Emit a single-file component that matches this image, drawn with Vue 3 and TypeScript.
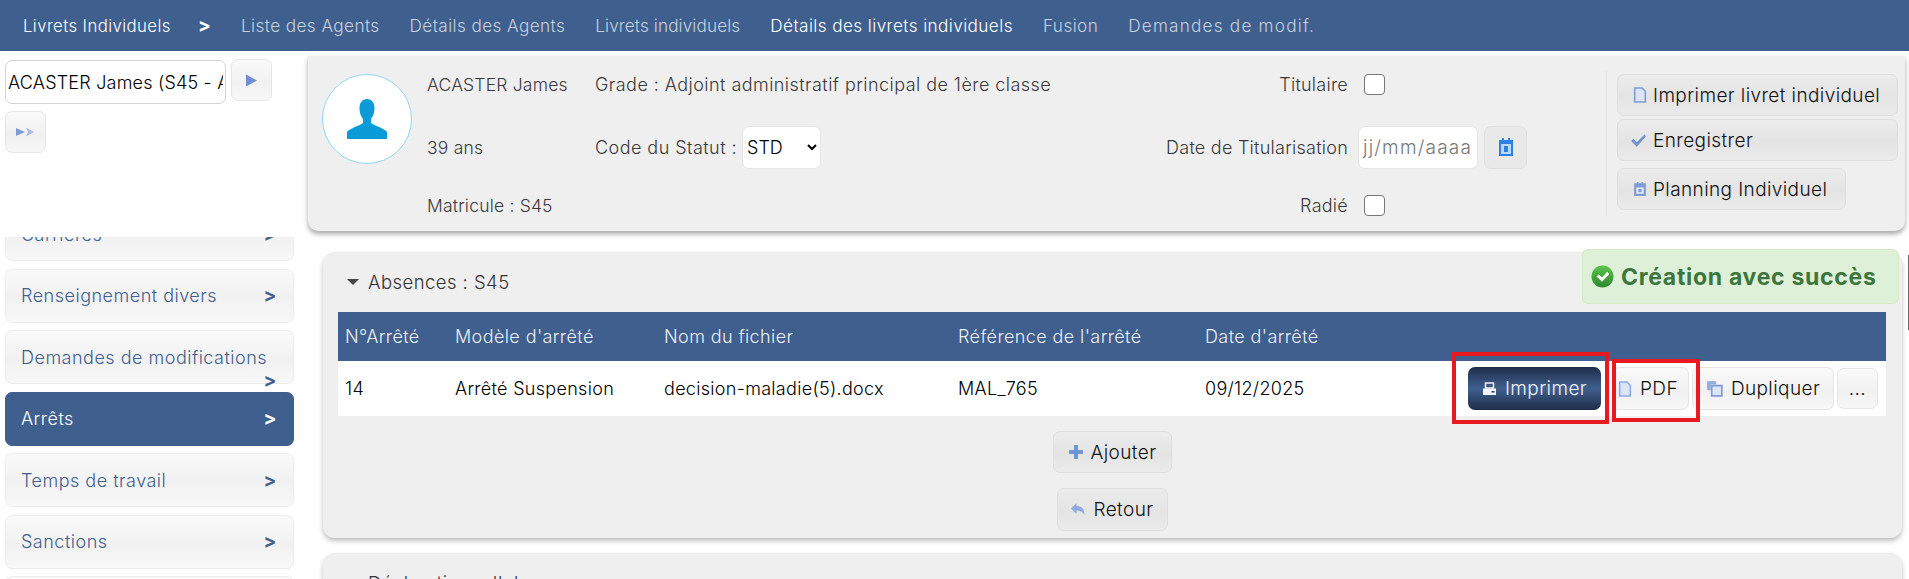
<script setup lang="ts">

import {ref} from 'vue'

const navLinks = [
  {label: 'Liste des Agents'},
  {label: 'Détails des Agents'},
  {label: 'Livrets individuels', tight: true},
  {label: 'Détails des livrets individuels', active: true},
  {label: 'Fusion'},
  {label: 'Demandes de modif.', wide: true},
]

const menu = [
  {label: 'Renseignement divers'},
  {label: 'Demandes de modifications', wrapped: true},
  {label: 'Arrêts', active: true},
  {label: 'Temps de travail'},
  {label: 'Sanctions'},
  {label: 'Formations'},
]

const statut = ref('STD')

</script>

<template>

  <div class="page">

    <header class="top-nav">
      <span class="top-nav__title">Livrets Individuels</span>
      <span class="top-nav__sep">&gt;</span>
      <a v-for="link in navLinks" :key="link.label" :class="['top-nav__link', {'top-nav__link--active': link.active, 'top-nav__link--wide': link.wide, 'top-nav__link--tight': link.tight}]">{{ link.label }}</a>
    </header>

    <div class="body">

      <aside class="side">
        <div class="side__search">
          <input class="agent-input" type="text" value="ACASTER James (S45 - Adjoint administratif)">
          <button class="btn btn--square">
            <svg width="15" height="15" viewBox="0 0 15 15"><path d="M2 1.500 13 7.500 2 13.500z" fill="#6f8fd0"/></svg>
          </button>
          <button class="btn btn--square btn--second">
            <svg width="22" height="12" viewBox="0 0 22 12"><path d="M1 2 10 6 1 10z" fill="#7f9bd6"/><path d="M11 1.500 19 6 11 10.500 13 6z" fill="#a9bde6"/></svg>
          </button>
        </div>

        <div class="side__menu">
          <div class="menu-item menu-item--cut">
            <span>Carrières</span>
            <span class="menu-item__chev">&gt;</span>
          </div>
          <div v-for="item in menu" :key="item.label" :class="['menu-item', {'menu-item--active': item.active, 'menu-item--wrapped': item.wrapped}]">
            <span>{{ item.label }}</span>
            <span class="menu-item__chev">&gt;</span>
          </div>
        </div>
      </aside>

      <main class="main">

        <section class="agent">
          <div class="agent__photo">
            <div class="avatar">
              <svg width="42" height="42" viewBox="0 0 42 42"><path d="M21 1c5 0 7.500 4 7.500 9 0 4-1 8-3.500 11v4c2 2 13 5 16 9v7H1v-7c3-4 14-7 16-9v-4c-2.500-3-3.500-7-3.500-11 0-5 2.500-9 7.500-9z" fill="#0a9bd8"/></svg>
            </div>
          </div>

          <div class="agent__cell agent__cell--short">ACASTER James</div>
          <div class="agent__cell">Grade : Adjoint administratif principal de 1ère classe</div>
          <div class="agent__label">Titulaire</div>
          <div class="agent__ctrl"><input class="check" type="checkbox"></div>

          <div class="agent__cell agent__cell--short">39 ans</div>
          <div class="agent__cell">
            Code du Statut :
            <select v-model="statut" class="statut">
              <option>STD</option>
            </select>
          </div>
          <div class="agent__label">Date de Titularisation</div>
          <div class="agent__ctrl agent__ctrl--date">
            <input class="date-input" type="text" placeholder="jj/mm/aaaa">
            <button class="btn btn--cal">
              <svg width="16" height="20" viewBox="0 0 16 20"><path d="M1 3h3V1h2v2h4V1h2v2h3v16H1z" fill="#2f80e4"/><path d="M3 7h10v10H3z" fill="#bcd8f8"/><path d="M6 9h4v6H6z" fill="#2f80e4"/></svg>
            </button>
          </div>

          <div class="agent__cell agent__cell--short">Matricule : S45</div>
          <div class="agent__cell"></div>
          <div class="agent__label">Radié</div>
          <div class="agent__ctrl"><input class="check" type="checkbox"></div>

          <div class="agent__actions">
            <button class="btn btn--panel btn--left">
              <span class="slot"><svg width="14" height="16" viewBox="0 0 13 15"><path d="M1.500 1h7l3 3v10h-10z" fill="#dbe5f6" stroke="#7f9bd6" stroke-width="1.500"/></svg></span>
              Imprimer livret individuel
            </button>
            <button class="btn btn--panel btn--left">
              <span class="slot"><svg width="17" height="15" viewBox="0 0 15 13"><path d="M1 7l2-2 3 3 7-7 1 2-8 9z" fill="#7391cf"/></svg></span>
              Enregistrer
            </button>
            <button class="btn btn--panel btn--left btn--planning">
              <span class="slot"><svg width="14" height="16" viewBox="0 0 13 15"><path d="M1 2h2.500V1H5v1h3V1h1.500v1H12v12H1z" fill="#7f9bd6"/><path d="M3 6h7v6H3z" fill="#e3eaf7"/><path d="M5 7.500h3v3H5z" fill="#7f9bd6"/></svg></span>
              Planning Individuel
            </button>
          </div>
        </section>

        <section class="block block--absences">
          <h2 class="block__title"><i class="caret"></i>Absences : S45</h2>

          <div class="toast">
            <svg width="23" height="23" viewBox="0 0 22 22">
              <defs>
                <linearGradient id="ok" x1="0" y1="0" x2="0" y2="1"><stop offset="0" stop-color="#5cc24f"/><stop offset="1" stop-color="#2c8a2c"/></linearGradient>
              </defs>
              <circle cx="11" cy="11" r="10.500" fill="url(#ok)"/>
              <path d="M5.500 11l2-2 3 3 5-5.500 2 2-7 7.500z" fill="#fff"/>
            </svg>
            <span>Création avec succès</span>
          </div>

          <table class="table">
            <colgroup>
              <col class="col-num">
              <col class="col-model">
              <col class="col-file">
              <col class="col-ref">
              <col class="col-date">
              <col>
            </colgroup>
            <thead>
              <tr>
                <th>N°Arrêté</th>
                <th>Modèle d'arrêté</th>
                <th>Nom du fichier</th>
                <th>Référence de l'arrêté</th>
                <th>Date d'arrêté</th>
                <th></th>
              </tr>
            </thead>
            <tbody>
              <tr>
                <td>14</td>
                <td>Arrêté Suspension</td>
                <td>decision-maladie(5).docx</td>
                <td>MAL_765</td>
                <td>09/12/2025</td>
                <td>
                  <div class="row-actions">
                    <button class="btn btn--dark">
                      <svg class="ico" width="15" height="14" viewBox="0 0 15 14"><path d="M3.500 1h8v5h-8z" fill="none" stroke="#f2f4f8" stroke-width="1.500"/><path d="M1 6.500h13V13H1z" fill="#f2f4f8"/><path d="M9.500 9h3v1.500h-3z" fill="#2a3c5c"/></svg>
                      Imprimer
                    </button>
                    <button class="btn btn--pdf">
                      <svg class="ico" width="14" height="16" viewBox="0 0 13 15"><path d="M1.500 1h7l3 3v10h-10z" fill="#dbe5f6" stroke="#8eaae0" stroke-width="1.500"/></svg>
                      PDF
                    </button>
                    <button class="btn btn--dup">
                      <svg class="ico" width="17" height="17" viewBox="0 0 15 15"><path d="M1 1h8v3H4v5H1z" fill="#8eaae0"/><path d="M5 5h9v9H5z" fill="#dbe5f6" stroke="#7f9bd6" stroke-width="1.500"/></svg>
                      Dupliquer
                    </button>
                    <button class="btn btn--more">...</button>
                  </div>
                </td>
              </tr>
            </tbody>
          </table>

          <div class="block__buttons">
            <button class="btn btn--panel btn--add">
              <svg class="ico" width="14" height="14" viewBox="0 0 14 14"><path d="M5 0h4v5h5v4H9v5H5V9H0V5h5z" fill="#7093d4"/></svg>
              Ajouter
            </button>
            <button class="btn btn--panel btn--back">
              <svg class="ico" width="14" height="13" viewBox="0 0 14 13"><path d="M5.500 0v3c5 0 8 3 8 9-1.500-3-4-4.500-8-4.500V11L0 5.500z" fill="#8eaae0"/></svg>
              Retour
            </button>
          </div>

          <div class="mark mark--print"></div>
          <div class="mark mark--pdf"></div>
        </section>

        <section class="block">
          <h2 class="block__title"><i class="caret"></i>Déclarations d'absences</h2>
        </section>

      </main>
    </div>

    <div class="edge-line"></div>
  </div>

</template>

<style>
html, body {
  margin: 0;
  background: #fff;
  overflow: hidden;
}
</style>

<style scoped>

.page {
  position: relative;
  width: 1909px;
  height: 579px;
  overflow: hidden;
  font-family: Inter, "Open Sans", sans-serif;
  font-size: 18px;
  font-weight: 300;
  color: #333;
}

.top-nav {
  height: 51px;
  background: #3f5f8e;
  display: flex;
  align-items: center;
  padding-left: 23px;
  color: #c6d0df;
  font-size: 17.200px;
  letter-spacing: 0.4px;
}

.top-nav__title {
  color: #fff;
  width: 175px;
  font-size: 16.800px;
  white-space: nowrap;
}

.top-nav__sep {
  color: #fff;
  font-weight: 700;
  font-size: 19px;
  width: 43px;
}

.top-nav__link {
  margin-right: 30px;
  white-space: nowrap;
}

.top-nav__link--active {
  color: #fff;
}

.top-nav__link--wide {
  letter-spacing: 1.200px;
}

.top-nav__link--tight {
  letter-spacing: 0.1px;
}

.body {
  display: flex;
}

.side {
  width: 308px;
  flex: none;
}

.side__search {
  height: 186px;
  box-sizing: border-box;
  padding: 8px 0 0 5px;
  display: flex;
  flex-wrap: wrap;
  align-content: flex-start;
  gap: 7px 5px;
}

.agent-input {
  width: 221px;
  height: 44px;
  box-sizing: border-box;
  margin-top: 1px;
  padding: 0 2px;
  border: 1px solid #d4d4d4;
  border-radius: 7px;
  font: inherit;
  letter-spacing: 0.2px;
  color: #000;
  background: #fff;
}

.btn {
  display: inline-flex;
  align-items: center;
  justify-content: center;
  box-sizing: border-box;
  border: 1px solid #e5e5e5;
  border-radius: 7px;
  background: linear-gradient(#fafafa, #f1f1f1 55%, #f7f7f7);
  font: inherit;
  font-size: 19px;
  letter-spacing: 0.4px;
  color: #111;
  padding: 0;
}

.ico {
  margin-right: 8px;
  flex: none;
}

.slot {
  width: 35px;
  display: flex;
  justify-content: flex-end;
  padding-right: 6px;
  box-sizing: border-box;
}

.btn--square {
  width: 41px;
  height: 42px;
}

.btn--second {
  margin-right: 200px;
}

.btn--panel {
  height: 42px;
  border-color: #dedede;
  background: linear-gradient(#ececec, #e4e4e4 55%, #ebebeb);
}

.btn--left {
  justify-content: flex-start;
}

.btn--cal {
  width: 43px;
  height: 43px;
  border-color: #e0e0e0;
  background: #e9e9e9;
}

.side__menu {
  height: 342px;
  overflow: hidden;
  display: flex;
  flex-direction: column;
  gap: 7.500px;
  padding-left: 5px;
}

.menu-item {
  flex: none;
  width: 289px;
  height: 54px;
  box-sizing: border-box;
  display: flex;
  justify-content: space-between;
  align-items: center;
  padding: 0 16px 0 15px;
  border: 1px solid #ececec;
  border-radius: 7px;
  background: linear-gradient(#fafafa, #f1f1f1 55%, #f8f8f8);
  color: #41608f;
  letter-spacing: 0.5px;
  white-space: nowrap;
}

.menu-item--cut {
  margin-top: -30px;
}

.menu-item--active {
  background: #3f5f8e;
  border-color: #3f5f8e;
  color: #fff;
}

.menu-item__chev {
  font-weight: 700;
  font-size: 19px;
}

.menu-item--wrapped .menu-item__chev {
  transform: translate(0, 23px);
  margin-left: -20px;
}

.main {
  flex: 1;
  min-width: 0;
  padding-top: 5px;
}

.agent {
  width: 1597px;
  height: 175px;
  box-sizing: border-box;
  background: #efefef;
  border-radius: 0 0 10px 10px;
  box-shadow: 0 3px 5px rgba(0, 0, 0, 0.35);
  display: grid;
  grid-template-columns: 119px 168px 553px 200px 258px 299px;
  grid-template-rows: 57px 68px 48px;
  align-items: center;
}

.agent__photo {
  grid-row: 1 / 4;
  align-self: start;
  padding: 18px 0 0 14px;
}

.avatar {
  width: 90px;
  height: 90px;
  box-sizing: border-box;
  border-radius: 50%;
  border: 1px solid #8fd6f2;
  background: #fff;
  display: flex;
  align-items: center;
  justify-content: center;
}

.agent__cell {
  display: flex;
  align-items: center;
  gap: 4px;
  color: #3a3a3a;
  letter-spacing: 0.45px;
  white-space: nowrap;
}

.agent__cell--short {
  font-size: 17.500px;
  letter-spacing: 0.2px;
}

.agent__label {
  text-align: right;
  color: #3a3a3a;
  letter-spacing: 0.25px;
  white-space: nowrap;
}

.agent__ctrl {
  display: flex;
  align-items: center;
  padding-left: 16px;
}

.agent__ctrl--date {
  padding-left: 10px;
  gap: 6px;
}

.agent__actions {
  grid-column: 6;
  grid-row: 1 / 4;
  align-self: start;
  margin-top: 15px;
  height: 145px;
  box-sizing: border-box;
  border-left: 1px solid #e4e4e4;
  padding: 3px 7px 0 10px;
  display: flex;
  flex-direction: column;
  gap: 3px;
}

.btn--planning {
  width: 229px;
  margin-top: 4px;
}

.check {
  appearance: none;
  width: 21px;
  height: 21px;
  margin: 0;
  border: 1px solid #777;
  border-radius: 4px;
  background: #fff;
}

.statut {
  width: 79px;
  height: 43px;
  box-sizing: border-box;
  border: 1px solid #e6e6e6;
  border-radius: 7px;
  background-color: #fff;
  font: inherit;
  letter-spacing: 0;
  color: #000;
  margin-left: 1px;
}

.date-input {
  width: 120px;
  height: 43px;
  box-sizing: border-box;
  padding: 0 4px;
  border: 1px solid #e6e6e6;
  border-radius: 7px;
  background: #fff;
  font: inherit;
  font-size: 19px;
  letter-spacing: 1.200px;
}

.date-input::placeholder {
  color: #777;
}

.block {
  position: relative;
  width: 1579px;
  margin: 21px 0 0 15px;
  box-sizing: border-box;
  background: #efefef;
  border-radius: 12px;
  box-shadow: 0 3px 5px rgba(0, 0, 0, 0.25);
  padding: 0 15px;
}

.block--absences {
  height: 286px;
}

.block + .block {
  margin-top: 15px;
  height: 60px;
}

.block__title {
  margin: 0;
  height: 60px;
  display: flex;
  align-items: center;
  font-size: 18.500px;
  font-weight: 300;
  color: #333;
  letter-spacing: 0.45px;
  padding-left: 9px;
}

.caret {
  width: 0;
  height: 0;
  border-left: 6px solid transparent;
  border-right: 6px solid transparent;
  border-top: 6px solid #444;
  margin-right: 9px;
}

.toast {
  position: absolute;
  left: 1259px;
  top: -3px;
  width: 317px;
  height: 55px;
  box-sizing: border-box;
  display: flex;
  align-items: center;
  gap: 7px;
  padding-left: 8px;
  background: #dff0d8;
  border: 1px solid #d6e9c6;
  border-radius: 6px;
  color: #3c763d;
  font-size: 23px;
  font-weight: 700;
  letter-spacing: 0.7px;
  white-space: nowrap;
}

.table {
  width: 1548px;
  border-collapse: collapse;
  table-layout: fixed;
}

.col-num { width: 110px; }
.col-model { width: 209px; }
.col-file { width: 294px; }
.col-ref { width: 247px; }
.col-date { width: 200px; }

.table th {
  height: 49px;
  padding: 0 0 0 7px;
  background: #3f5f8e;
  color: #edf0f5;
  font-weight: 300;
  font-size: 18px;
  text-align: left;
  letter-spacing: 0.4px;
  white-space: nowrap;
}

.table td {
  height: 55px;
  padding: 0 0 0 7px;
  background: #fff;
  color: #000;
  font-weight: 300;
  font-size: 18px;
  letter-spacing: 0.3px;
  white-space: nowrap;
}

.row-actions {
  display: flex;
  justify-content: flex-end;
  align-items: center;
  gap: 3px;
  padding-right: 8px;
}

.btn--dark {
  width: 133px;
  height: 43px;
  margin-right: 8px;
  border: 0;
  background: linear-gradient(#1f2d48, #3f5f8e 50%, #1f2d48);
  color: #f2f4f8;
}

.btn--pdf {
  width: 77px;
  height: 43px;
  padding-right: 5px;
}

.btn--dup {
  width: 142px;
  height: 43px;
}

.btn--more {
  width: 41px;
  height: 41px;
  align-items: flex-end;
  padding-bottom: 8px;
}

.block__buttons {
  display: flex;
  flex-direction: column;
  align-items: center;
  gap: 15px;
  margin-top: 15px;
}

.btn--add {
  width: 119px;
}

.btn--back {
  width: 111px;
  height: 43px;
}

.mark {
  position: absolute;
  box-sizing: border-box;
  border: 4px solid #e8191f;
}

.mark--print {
  left: 1129px;
  top: 100px;
  width: 157px;
  height: 72px;
}

.mark--pdf {
  left: 1289px;
  top: 107px;
  width: 88px;
  height: 63px;
}

.edge-line {
  position: absolute;
  right: 0;
  top: 255px;
  width: 1px;
  height: 75px;
  background: #666;
}

</style>
